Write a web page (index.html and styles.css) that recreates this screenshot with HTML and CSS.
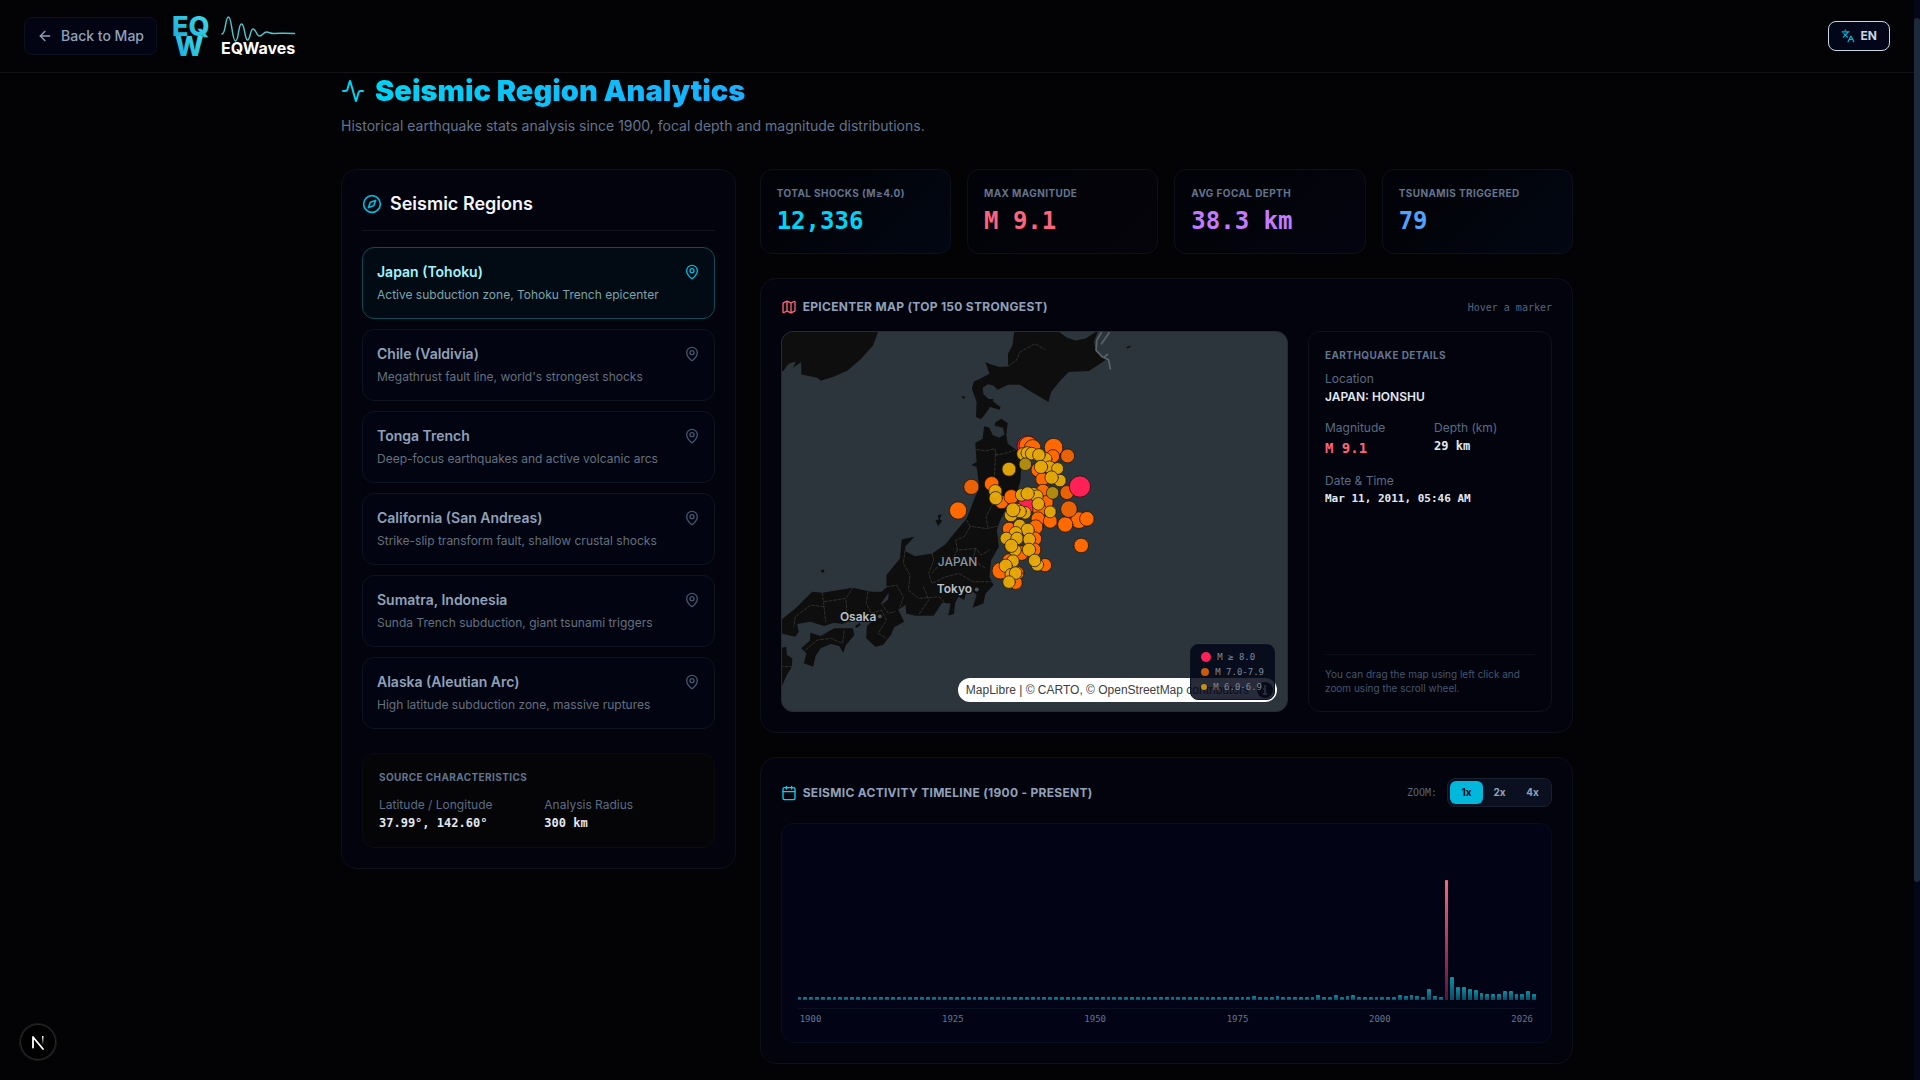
FILE: index.html
```html
<!DOCTYPE html>
<html lang="en">
<head>
<meta charset="utf-8">
<meta name="viewport" content="width=device-width, initial-scale=1">
<title>EQWaves - Seismic Region Analytics</title>
<link rel="stylesheet" href="styles.css">
</head>
<body>
<svg class="sprite" aria-hidden="true">
  <symbol id="pin" viewBox="0 0 24 24"><path d="M20 10c0 4.993-5.539 10.193-7.399 11.799a1 1 0 0 1-1.202 0C9.539 20.193 4 14.993 4 10a8 8 0 0 1 16 0"/><circle cx="12" cy="10" r="3"/></symbol>
</svg>

<header class="topbar">
  <div class="topbar-left">
    <a class="back" href="#">
      <svg class="icon" viewBox="0 0 24 24"><path d="m12 19-7-7 7-7"/><path d="M19 12H5"/></svg>
      Back to Map
    </a>
    <svg class="logo" viewBox="0 0 130 56" role="img" aria-label="EQWaves">
      <defs><linearGradient id="lg" x1="0" y1="1" x2="1" y2="0"><stop offset="0" stop-color="#1aa6dc"/><stop offset="1" stop-color="#3fdfe8"/></linearGradient></defs>
      <text class="logo-big" x="0" y="28">EQ</text>
      <text class="logo-big" x="3" y="48">W</text>
      <path class="logo-wave" d="M50 26c4 0 3-17 6.500-17s3.500 24 7 24 2.500-17 6-17 3 16 6 16 2.500-11 5.500-11 3.500 7 6.500 7 4-4 7-4 4 2 8 1.500 10 0 20 0"/>
      <text class="logo-word" x="49" y="46">EQWaves</text>
    </svg>
  </div>
  <button class="lang" type="button">
    <svg viewBox="0 0 24 24"><path d="m5 8 6 6M4 14l6-6 2-3M2 5h12M7 2h1M22 22l-5-10-5 10M14 18h6"/></svg>
    EN
  </button>
</header>

<main class="page">
  <div class="title-row">
    <svg viewBox="0 0 24 24"><path d="M22 12h-2.480a2 2 0 0 0-1.930 1.460l-2.350 8.360a.25.25 0 0 1-.48 0L9.240 2.180a.25.25 0 0 0-.48 0l-2.350 8.360A2 2 0 0 1 4.490 12H2"/></svg>
    <h1>Seismic Region Analytics</h1>
  </div>
  <p class="subtitle">Historical earthquake stats analysis since 1900, focal depth and magnitude distributions.</p>

  <div class="layout">
    <aside class="panel regions">
      <h2><svg viewBox="0 0 24 24"><circle cx="12" cy="12" r="10"/><path d="m16.240 7.760-1.804 5.411a2 2 0 0 1-1.265 1.265L7.760 16.240l1.804-5.411a2 2 0 0 1 1.265-1.265z"/></svg>Seismic Regions</h2>
      <div class="region-list">
        <button class="region active" type="button"><span class="name">Japan (Tohoku)<svg><use href="#pin"/></svg></span><span class="desc">Active subduction zone, Tohoku Trench epicenter</span></button>
        <button class="region" type="button"><span class="name">Chile (Valdivia)<svg><use href="#pin"/></svg></span><span class="desc">Megathrust fault line, world's strongest shocks</span></button>
        <button class="region" type="button"><span class="name">Tonga Trench<svg><use href="#pin"/></svg></span><span class="desc">Deep-focus earthquakes and active volcanic arcs</span></button>
        <button class="region" type="button"><span class="name">California (San Andreas)<svg><use href="#pin"/></svg></span><span class="desc">Strike-slip transform fault, shallow crustal shocks</span></button>
        <button class="region" type="button"><span class="name">Sumatra, Indonesia<svg><use href="#pin"/></svg></span><span class="desc">Sunda Trench subduction, giant tsunami triggers</span></button>
        <button class="region" type="button"><span class="name">Alaska (Aleutian Arc)<svg><use href="#pin"/></svg></span><span class="desc">High latitude subduction zone, massive ruptures</span></button>
      </div>
      <section class="source">
        <h3 class="caption">Source Characteristics</h3>
        <dl class="pair">
          <div><dt>Latitude / Longitude</dt><dd class="mono">37.99°, 142.60°</dd></div>
          <div><dt>Analysis Radius</dt><dd class="mono">300 km</dd></div>
        </dl>
      </section>
    </aside>

    <div class="content">
      <div class="stats">
        <div class="stat cyan"><p class="caption">Total Shocks (M≥4.0)</p><p class="value">12,336</p></div>
        <div class="stat rose"><p class="caption">Max Magnitude</p><p class="value">M 9.1</p></div>
        <div class="stat purple"><p class="caption">Avg Focal Depth</p><p class="value">38.3 km</p></div>
        <div class="stat blue"><p class="caption">Tsunamis Triggered</p><p class="value">79</p></div>
      </div>

      <section class="panel">
        <div class="panel-head">
          <h2 class="rose"><svg viewBox="0 0 24 24"><path d="M14.106 5.553a2 2 0 0 0 1.788 0l3.659-1.830A1 1 0 0 1 21 4.619v12.764a1 1 0 0 1-.553.894l-4.553 2.277a2 2 0 0 1-1.788 0l-4.212-2.106a2 2 0 0 0-1.788 0l-3.659 1.830A1 1 0 0 1 3 19.381V6.618a1 1 0 0 1 .553-.894l4.553-2.277a2 2 0 0 1 1.788 0zM15 5.764v15M9 3.236v15"/></svg>Epicenter Map (Top 150 Strongest)</h2>
          <span class="hint">Hover a marker</span>
        </div>
        <div class="map-grid">
          <div class="map">
            <svg class="map-canvas" viewBox="0 0 506 380" preserveAspectRatio="xMidYMid slice" role="img" aria-label="Map of Japan with earthquake epicenters">
              <g transform="translate(-12 -11.300) scale(.338 .3333)">
                <g class="land">
                  <path d="M30 30H322L305 75 270 115 230 150 190 168 150 181 140 172 93 162 92 125 68 143 76 124 55 130 40 150 30 160Z"/>
                  <path d="M724 30 718 75 705 100 705 138 680 140 655 132 638 125 650 160 640 165 622 175 604 183 598 205 612 245 610 290 625 297 640 278 652 260 680 268 683 260 660 243 662 236 648 236 632 222 630 202 645 192 660 195 675 208 705 193 740 193 780 218 825 245 833 215 860 180 885 155 945 152 995 118 965 90 960 65 972 30 935 54 905 60 880 52 850 30Z"/>
                  <path d="M634 318 650 322 660 345 680 352 695 342 690 322 665 316 668 306 685 295 704 308 700 345 704 370 737 395 745 430 742 480 728 530 700 565 682 600 672 630 678 680 655 720 650 770 662 795 638 822 632 850 600 863 612 825 598 812 580 822 575 840 558 830 548 850 545 882 528 886 535 850 510 848 485 887 430 887 403 880 402 855 380 868 397 905 368 922 358 945 335 975 312 980 285 955 287 918 300 905 262 905 245 900 215 912 190 908 160 918 120 905 80 912 85 935 75 950 30 940 30 902 75 865 125 815 155 818 245 803 300 815 330 815 345 802 345 765 385 715 390 658 428 650 400 680 402 694 430 708 480 700 520 672 545 640 583 595 600 550 620 500 612 440 597 434 612 425 608 368 630 355Z"/>
                  <path d="M120 938 150 948 190 925 245 925 250 945 225 975 217 998 205 978 180 972 150 985 135 1008 128 1040 100 1030 108 1000 92 985 118 962Z"/>
                  <path d="M30 985 48 980 50 1005 66 1015 65 1040 50 1065 30 1110Z"/>
                  <path d="M497 585 509 582 503 597 510 602 498 618 490 600 500 598Z"/>
                  <circle cx="156" cy="753" r="5"/><circle cx="573" cy="231" r="4"/><path d="m1056 80 14-5-4 6-9 3Z"/><path d="m252 918 14-10 2 8-12 8Z"/>
                </g>
                <path class="water" d="M328 850 352 818 350 838 336 850Z"/>
                <g class="borders">
                  <path d="M612 388 640 392 665 385 672 405 700 398 725 390M668 400 665 470 655 500 665 540 640 590 645 620M583 600 592 618 640 625 675 618M592 620 575 650 550 660 555 690 610 685 625 705 650 690M480 700 485 720 470 760 480 790 520 770 560 760 600 785 655 785M400 690 395 730 415 765 410 810 440 835 500 830 520 850M345 800 375 795 395 830 385 860M155 818 160 860 120 855 75 890 70 920M160 860 165 905M160 845 225 835 245 803M225 840 230 905M290 815 285 850 300 880 330 870 345 900 320 940 345 955M330 850 350 880 370 875M105 990 140 960 180 955 215 970 220 930M30 1040 64 1040M555 690 540 720 500 735 480 760M610 685 600 720 640 745M455 800 470 840 440 885"/>
                  <path d="M705 138 730 120 740 95 785 70 815 88"/>
                </g>
                <path class="kuril" d="M985 30 968 60 966 90 985 110 1003 118 1008 145M1005 36 982 70M990 110 1000 102"/>
              </g>
              <g class="labels">
                <text x="156" y="235">JAPAN</text>
                <text class="city" x="155" y="262">Tokyo</text>
                <text class="city" x="58" y="290">Osaka</text>
                <circle cx="195" cy="258" r="2"/><circle cx="98" cy="285" r="2"/>
              </g>
              <g class="quakes" transform="translate(158 89) scale(.3333)">
                <g class="q8"><circle cx="264" cy="77" r="32"/></g>
                <g class="q7">
                  <circle cx="266" cy="75" r="28"/><circle cx="279" cy="82" r="25"/><circle cx="342" cy="81" r="28"/><circle cx="340" cy="107" r="20"/><circle cx="296" cy="148" r="22"/><circle cx="308" cy="176" r="20"/><circle cx="156" cy="190" r="22"/><circle cx="186" cy="245" r="20"/><circle cx="215" cy="229" r="22"/><circle cx="310" cy="212" r="21"/><circle cx="320" cy="246" r="21"/>
                </g>
                <g class="q8"><circle cx="263" cy="250" r="28"/></g>
                <g class="q7">
                  <circle cx="300" cy="268" r="21"/><circle cx="295" cy="295" r="21"/><circle cx="332" cy="302" r="21"/><circle cx="208" cy="325" r="20"/><circle cx="288" cy="320" r="22"/><circle cx="285" cy="355" r="21"/><circle cx="283" cy="388" r="21"/><circle cx="245" cy="398" r="22"/><circle cx="208" cy="420" r="20"/><circle cx="182" cy="451" r="25"/><circle cx="232" cy="458" r="21"/><circle cx="228" cy="487" r="20"/><circle cx="316" cy="434" r="20"/><circle cx="418" cy="299" r="25"/><circle cx="377" cy="312" r="23"/><circle cx="442" cy="295" r="22"/><circle cx="425" cy="375" r="22"/><circle cx="55" cy="270" r="26"/>
                </g>
                <g class="q7 dim"><circle cx="384" cy="106" r="21"/><circle cx="95" cy="199" r="23"/><circle cx="382" cy="216" r="21"/><circle cx="388" cy="266" r="25"/></g>
                <g class="q8"><circle cx="421" cy="198" r="32"/></g>
                <g class="q6">
                  <circle cx="250" cy="100" r="19"/><circle cx="263" cy="97" r="19"/><circle cx="276" cy="99" r="19"/><circle cx="318" cy="115" r="19"/><circle cx="298" cy="103" r="19"/><circle cx="330" cy="140" r="19"/><circle cx="304" cy="139" r="20"/><circle cx="354" cy="144" r="18"/><circle cx="361" cy="180" r="19"/><circle cx="336" cy="171" r="20"/><circle cx="208" cy="146" r="21"/><circle cx="167" cy="212" r="20"/><circle cx="168" cy="233" r="20"/><circle cx="246" cy="223" r="19"/><circle cx="282" cy="220" r="19"/><circle cx="292" cy="227" r="19"/><circle cx="264" cy="219" r="20"/><circle cx="296" cy="250" r="19"/><circle cx="332" cy="274" r="18"/><circle cx="214" cy="284" r="20"/><circle cx="232" cy="267" r="19"/><circle cx="256" cy="277" r="19"/><circle cx="241" cy="273" r="19"/><circle cx="220" cy="268" r="21"/><circle cx="240" cy="315" r="19"/><circle cx="264" cy="328" r="20"/><circle cx="228" cy="338" r="20"/><circle cx="200" cy="354" r="19"/><circle cx="232" cy="354" r="19"/><circle cx="269" cy="357" r="19"/><circle cx="226" cy="389" r="19"/><circle cx="215" cy="376" r="20"/><circle cx="268" cy="388" r="20"/><circle cx="220" cy="422" r="19"/><circle cx="293" cy="433" r="19"/><circle cx="285" cy="420" r="19"/><circle cx="198" cy="436" r="20"/><circle cx="214" cy="462" r="18"/><circle cx="228" cy="458" r="19"/><circle cx="208" cy="485" r="19"/>
                </g>
                <g class="q6 dim"><circle cx="257" cy="131" r="19"/><circle cx="339" cy="217" r="19"/></g>
              </g>
            </svg>
            <div class="attribution">
              <span><a href="#">MapLibre</a> | <a href="#">© CARTO</a>, <a href="#">© OpenStreetMap</a> contributors</span>
              <svg viewBox="0 0 24 24"><circle cx="12" cy="12" r="8"/><path d="M12 8v1M11 11h1v5m-1.500 0h3"/></svg>
            </div>
            <ul class="legend">
              <li><i class="dot d8"></i>M ≥ 8.0</li>
              <li><i class="dot d7"></i>M 7.0-7.9</li>
              <li><i class="dot d6"></i>M 6.0-6.9</li>
            </ul>
          </div>

          <section class="details">
            <h3 class="caption">Earthquake Details</h3>
            <dl>
              <div><dt>Location</dt><dd>JAPAN: HONSHU</dd></div>
              <div class="pair">
                <div><dt>Magnitude</dt><dd class="mono mag">M 9.1</dd></div>
                <div><dt>Depth (km)</dt><dd class="mono">29 km</dd></div>
              </div>
              <div><dt>Date &amp; Time</dt><dd class="mono date">Mar 11, 2011, 05:46 AM</dd></div>
            </dl>
            <p class="note">You can drag the map using left click and zoom using the scroll wheel.</p>
          </section>
        </div>
      </section>

      <section class="panel">
        <div class="panel-head">
          <h2><svg viewBox="0 0 24 24"><path d="M8 2v4M16 2v4M3 10h18"/><rect x="3" y="4" width="18" height="18" rx="2"/></svg>Seismic Activity Timeline (1900 - Present)</h2>
          <div class="zoom">
            <span class="hint">ZOOM:</span>
            <div class="segment">
              <button class="on" type="button">1x</button>
              <button type="button">2x</button>
              <button type="button">4x</button>
            </div>
          </div>
        </div>
        <div class="chart">
          <div class="bars" id="bars"></div>
          <div class="axis"><span>1900</span><span>1925</span><span>1950</span><span>1975</span><span>2000</span><span>2026</span></div>
        </div>
      </section>
    </div>
  </div>
</main>

<div class="scroll-track"><div class="scroll-thumb"></div></div>
<button class="dev-badge" type="button" aria-label="Open dev tools">
  <svg viewBox="0 0 36 36"><defs><linearGradient id="fade" x1="0" y1="0" x2="0" y2="1"><stop offset="0" stop-color="#fff"/><stop offset="1" stop-color="#fff" stop-opacity="0"/></linearGradient></defs><path d="M13 23.500V13L23 25" fill="none" stroke="#fff" stroke-width="1.800"/><rect x="22" y="12" width="1.500" height="9" fill="url(#fade)" stroke="none"/></svg>
</button>
<script src="timeline.js"></script>
</body>
</html>
```
FILE: timeline.js
```js
// Bar height in pixels per year; quiet years get the minimum height.
const FIRST = 1900, LAST = 2026, MIN = 3, PEAK = 2011;
const heights = {
  1978: 4, 1982: 4, 1989: 5, 1992: 5, 1994: 4, 1995: 5, 2003: 5, 2004: 4,
  2005: 5, 2006: 4, 2008: 11, 2009: 4, 2011: 120, 2012: 23, 2013: 13,
  2014: 13, 2015: 11, 2016: 10, 2017: 7, 2018: 6, 2019: 6, 2020: 6,
  2021: 9, 2022: 9, 2023: 6, 2024: 6, 2025: 9, 2026: 6
};
const bars = document.getElementById('bars');
for (let year = FIRST; year <= LAST; year++) {
  const bar = document.createElement('div');
  bar.className = year === PEAK ? 'bar peak' : 'bar';
  bar.style.height = (heights[year] || MIN) + 'px';
  bars.appendChild(bar);
}
```
FILE: styles.css
```css
* { box-sizing: border-box; margin: 0; padding: 0; }

body {
  min-height: 100vh;
  padding-right: 6px;
  background: #030305;
  color: #e2e8f0;
  font-family: Inter, "Liberation Sans", sans-serif;
  font-size: 14px;
  line-height: 20px;
}

button { font: inherit; color: inherit; cursor: pointer; }
a { color: inherit; text-decoration: none; }
svg { display: block; flex: none; fill: none; stroke: currentColor; stroke-width: 2; stroke-linecap: round; stroke-linejoin: round; }
.sprite { position: absolute; width: 0; height: 0; }

/* Top bar */
.topbar {
  display: flex;
  align-items: center;
  justify-content: space-between;
  height: 73px;
  padding: 0 24px;
  border-bottom: 1px solid #121217;
}
.topbar-left { display: flex; align-items: center; gap: 15px; }
.back {
  display: flex;
  align-items: center;
  gap: 8px;
  padding: 8px 12px;
  border: 1px solid #0b0f1f;
  border-radius: 8px;
  background: #020414;
  color: #90a1b9;
  font-weight: 500;
}
.back svg { width: 16px; height: 16px; }
.logo { width: 130px; height: 56px; overflow: visible; }
.logo text { stroke: none; }
.logo-big { fill: url(#lg); font-size: 27px; font-weight: 800; }
.logo-word { fill: #fff; font-size: 16px; font-weight: 700; }
.logo-wave { stroke: #4fc3cc; stroke-width: 1.5; }
.lang {
  display: flex;
  align-items: center;
  gap: 6px;
  height: 30px;
  padding: 0 12px;
  border: 1px solid #cad5e2;
  border-radius: 8px;
  background: #020618;
  color: #cad5e2;
  font-size: 12px;
  font-weight: 700;
}
.lang svg { width: 14px; height: 14px; color: #00b8db; }

/* Page */
.page { max-width: 1280px; margin: 0 auto; padding: 0 24px 16px; }
.title-row { display: flex; align-items: center; gap: 10px; }
.title-row svg { width: 24px; height: 24px; color: #00d3f3; }
h1 {
  font-size: 29px;
  line-height: 36px;
  font-weight: 900;
  background: linear-gradient(90deg, #00d3f3, #1aaeff);
  background-clip: text;
  -webkit-background-clip: text;
  color: transparent;
}
.subtitle { margin: 7px 0 33px; color: #62748e; }

.layout { display: grid; grid-template-columns: repeat(12, 1fr); gap: 24px; align-items: start; }
.regions { grid-column: span 4; }
.content { grid-column: span 8; display: flex; flex-direction: column; gap: 24px; min-width: 0; }
.panel { padding: 20px; border: 1px solid #0d1019; border-radius: 16px; background: #02030c; }
.caption { color: #62748e; font-size: 10px; line-height: 15px; font-weight: 700; text-transform: uppercase; letter-spacing: .4px; }
.mono, .hint, .value, .axis, .legend { font-family: "DejaVu Sans Mono", "Liberation Mono", monospace; }

/* Regions */
.regions h2 {
  display: flex;
  align-items: center;
  gap: 8px;
  padding-bottom: 12px;
  margin-bottom: 16px;
  border-bottom: 1px solid #0f131d;
  font-size: 18px;
  line-height: 28px;
  font-weight: 600;
  color: #f1f5f9;
}
.regions h2 svg { width: 20px; height: 20px; color: #00b8db; }
.region-list { display: flex; flex-direction: column; gap: 10px; }
.region {
  padding: 14px;
  border: 1px solid #0d1420;
  border-radius: 12px;
  background: #020511;
  text-align: left;
}
.region .name { display: flex; align-items: center; justify-content: space-between; margin-bottom: 4px; color: #90a1b9; font-weight: 600; }
.region .name svg { width: 16px; height: 16px; color: #45556c; }
.region .desc { display: block; color: #64707f; font-size: 12px; line-height: 18px; }
.region.active { border-color: #0c4d59; background: #020b14; }
.region.active .name { color: #a2f4fd; }
.region.active .name svg { color: #00b8db; }
.region.active .desc { color: #7aa5ac; }

.source { margin-top: 24px; padding: 16px; border: 1px solid #0b0b10; border-radius: 12px; background: #050508; }
.source .caption { margin-bottom: 12px; }
.pair { display: grid; grid-template-columns: 1fr 1fr; gap: 12px; }
dt { margin-bottom: 2px; color: #5a6b84; font-size: 12px; line-height: 16px; }
dd { color: #e2e8f0; font-size: 12px; line-height: 16px; font-weight: 600; }

/* Stats */
.stats { display: grid; grid-template-columns: repeat(4, 1fr); gap: 16px; }
.stat { padding: 16px; border: 1px solid #0d1019; border-radius: 12px; background: linear-gradient(135deg, #020308 30%, #020714); }
.value { margin-top: 4px; font-size: 24px; line-height: 32px; font-weight: 700; }
.stat .caption { white-space: nowrap; }
.cyan .value { color: #00d3f3; }
.stat.rose { background: linear-gradient(135deg, #020308 30%, #06030b); }
.rose .value { color: #ff637e; }
.stat.purple { background: linear-gradient(135deg, #020308 30%, #040410); }
.purple .value { color: #c27aff; }
.blue .value { color: #51a2ff; }

/* Panel headings */
.panel-head { display: flex; align-items: center; justify-content: space-between; margin-bottom: 16px; }
.panel-head h2 { display: flex; align-items: center; gap: 6px; color: #90a1b9; font-size: 12px; line-height: 16px; font-weight: 700; text-transform: uppercase; letter-spacing: .3px; }
.panel-head h2 svg { width: 16px; height: 16px; color: #00d3f3; }
.panel-head h2.rose svg { color: #ff637e; }
.hint { color: #56657c; font-size: 10px; line-height: 15px; }

/* Map */
.map-grid { display: grid; grid-template-columns: 1fr 244px; gap: 20px; }
.map { position: relative; height: 381px; border: 1px solid #252b33; border-radius: 12px; overflow: hidden; background: #2c353c; }
.map-canvas { width: 100%; height: 100%; stroke: none; }
.land { fill: #0e0e0e; }
.water { fill: #2c353c; }
.borders { fill: none; stroke: #42413d; stroke-width: 2; stroke-dasharray: 9 5; }
.kuril { fill: none; stroke: #5a626a; stroke-width: 5; }
.labels { fill: #8d959c; font-size: 12px; font-weight: 500; }
.labels .city { fill: #b9c0c7; font-weight: 600; }
.labels circle { fill: #4c5257; }
.labels text { paint-order: stroke; stroke: #0e0e0e; stroke-width: 2px; }
.quakes { stroke: #1b1307; stroke-opacity: .75; stroke-width: 3; }
.q8 { fill: #ff2056; }
.q7 { fill: #ff6900; }
.q7.dim { fill: #e96208; }
.q6 { fill: #e5a90a; fill-opacity: .96; }
.q6.dim { fill: #b48f0c; }

.attribution {
  position: absolute;
  right: 10px;
  bottom: 9px;
  display: flex;
  align-items: center;
  height: 24px;
  padding-left: 8px;
  border-radius: 12px;
  background: #fff;
  color: #404040;
  font: 12px/20px "Liberation Sans", sans-serif;
  white-space: nowrap;
}
.attribution span { margin-right: 4px; }
.attribution svg { width: 24px; height: 24px; color: #fff; stroke-width: 2; }
.attribution svg circle { fill: #222; stroke: none; }
.legend {
  position: absolute;
  right: 12px;
  bottom: 11px;
  display: flex;
  flex-direction: column;
  gap: 1px;
  padding: 5px 10px;
  border: 1px solid #0c1120;
  border-radius: 8px;
  background: rgba(2, 6, 24, .85);
  color: #7c899d;
  font-size: 9px;
  line-height: 14px;
  list-style: none;
}
.legend li { display: flex; align-items: center; gap: 6px; }
.dot { border-radius: 50%; }
.d8 { width: 10px; height: 10px; background: #ff2056; }
.d7 { width: 8px; height: 8px; background: #c75a0c; }
.d6 { width: 6px; height: 6px; background: #c5900e; }

/* Earthquake details */
.details { display: flex; flex-direction: column; padding: 16px; border: 1px solid #0d121c; border-radius: 12px; background: #02030c; }
.details dl { display: flex; flex-direction: column; gap: 15px; margin-top: 8px; }
.details .pair { gap: 8px; }
dd.mag { color: #ff637e; font-size: 14px; line-height: 20px; font-weight: 700; }
dd.date { font-size: 11px; }
.note { margin-top: auto; padding-top: 12px; border-top: 1px solid #0a0e18; color: #45556c; font-size: 10px; line-height: 14px; }

/* Timeline */
.zoom { display: flex; align-items: center; gap: 10px; }
.segment { display: flex; padding: 2px; border: 1px solid #1a2030; border-radius: 8px; background: #0b1020; }
.segment button { width: 33px; padding: 4px 0; border: 0; border-radius: 6px; background: none; color: #90a1b9; font-size: 10px; line-height: 15px; font-weight: 700; }
.segment .on { background: #00b8db; color: #020618; }
.chart { padding: 16px; border: 1px solid #090c1b; border-radius: 12px; background: #020415; }
.bars { display: flex; align-items: flex-end; gap: 2px; height: 160px; }
.bar { flex: 1; border-radius: 1px 1px 0 0; background: linear-gradient(#1090a5, #084a62); }
.bar.peak { background: linear-gradient(#ff637e, #5c1235); }
.axis { display: flex; justify-content: space-between; margin-top: 8px; padding: 4px 2px 0; border-top: 1px solid #0b1020; color: #62748e; font-size: 9px; line-height: 13px; }

/* Fixed overlays */
.scroll-track { position: fixed; top: 0; right: 0; bottom: 0; width: 6px; background: #020617; }
.scroll-thumb { height: 80%; margin-top: 18px; border-radius: 3px; background: #1e293b; }
.dev-badge { position: fixed; left: 20px; bottom: 20px; width: 36px; height: 36px; border: 0; border-radius: 50%; background: #000; box-shadow: 0 0 0 1px #171717, inset 0 0 0 1px #2a2a2a; }
```
